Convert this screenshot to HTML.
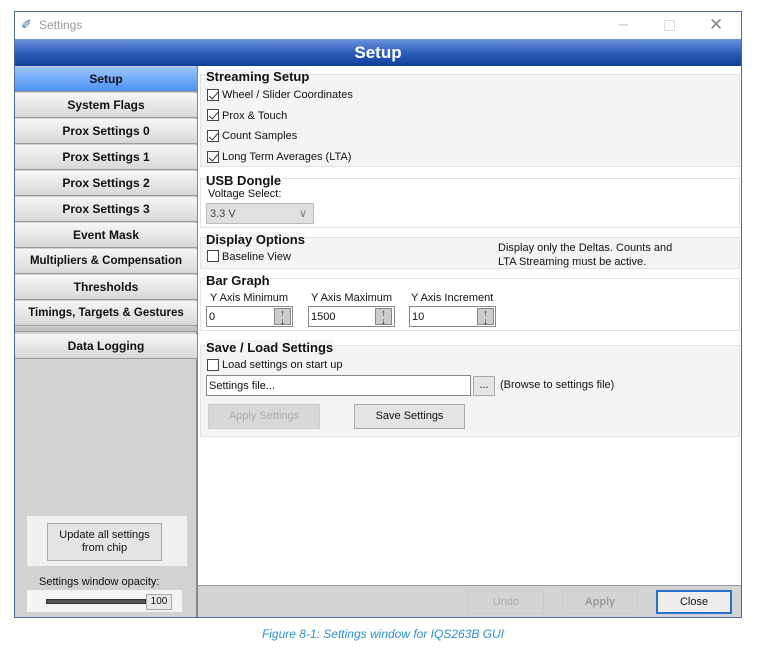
<!DOCTYPE html>
<html><head><meta charset="utf-8"><style>
*{box-sizing:border-box;margin:0;padding:0}
body{width:766px;height:650px;background:#fff;font-family:"Liberation Sans",Tahoma,sans-serif;font-size:11px;color:#111;position:relative;overflow:hidden}
.a{position:absolute}
.win{left:14px;top:11px;width:728px;height:607px;border:1px solid #4a6a9a;background:#fff;overflow:hidden}
.title{left:0;top:0;width:726px;height:27px;background:#fff;color:#999;font-size:12px}
.hdr{left:0;top:27px;width:726px;height:27px;background:linear-gradient(#6a93de,#2a5cb8 55%,#0f3f94);color:#fff;font-weight:bold;font-size:17px;text-align:center;line-height:27px}
.side{left:0;top:54px;width:183px;height:551px;background:#d2d2d2;border-right:2px solid #888}
.nb{position:absolute;left:0;width:182px;height:25px;background:linear-gradient(#f6f6f6,#d8d8d8);border-bottom:1px solid #9a9a9a;font-weight:bold;font-size:12px;text-align:center;line-height:25px}
.sel{background:linear-gradient(#9cc6ff,#4a90f0)}
.grp{position:absolute;left:185px;width:540px;border:1px solid #e2e2e2}
.g{background:#f4f4f4}.w{background:#fff}
.gt{position:absolute;font-weight:bold;font-size:13px;background:inherit}
.cb{position:absolute;width:12px;height:12px;border:1px solid #444;background:#fff}
.cb.c::after{content:"";position:absolute;left:3px;top:0px;width:4px;height:8px;border:solid #333;border-width:0 1.5px 1.5px 0;transform:rotate(40deg)}
.lb{position:absolute;font-size:11px;white-space:nowrap}
.inp{position:absolute;height:21px;border:1px solid #888;background:#fff;font-size:11px;padding:4px 2px}
.sp{position:absolute;width:17px;height:17px;background:#ccc;border:1px solid #888;font-size:9px;line-height:8px;text-align:center;font-weight:bold}
.btn{position:absolute;border:1px solid #aaa;background:#e4e4e4;text-align:center;font-size:11px}
</style></head><body>
<div class="a win">
 <div class="a title"><span class="a" style="left:6px;top:5px;color:#4468a8;font-size:13px">&#x2710;</span><span class="a" style="left:24px;top:6px">Settings</span>
 <span class="a" style="left:604px;top:4px;font-size:16px;color:#bbb">&#x2013;</span><span class="a" style="left:649px;top:8px;width:11px;height:11px;border:1px solid #ddd"></span><span class="a" style="left:694px;top:3px;font-size:17px;color:#888">&#x2715;</span></div>
 <div class="a hdr">Setup</div>
 <div class="a side">
  <div class="nb sel" style="top:1px">Setup</div>
  <div class="nb" style="top:27px">System Flags</div>
  <div class="nb" style="top:53px">Prox Settings 0</div>
  <div class="nb" style="top:79px">Prox Settings 1</div>
  <div class="nb" style="top:105px">Prox Settings 2</div>
  <div class="nb" style="top:131px">Prox Settings 3</div>
  <div class="nb" style="top:157px">Event Mask</div>
  <div class="nb" style="top:183px;font-size:11.5px">Multipliers &amp; Compensation</div>
  <div class="nb" style="top:209px">Thresholds</div>
  <div class="nb" style="top:235px;font-size:11.5px">Timings, Targets &amp; Gestures</div>
  <div class="nb" style="top:268px">Data Logging</div>
  <div class="a" style="left:0;top:261px;width:182px;height:5px;background:#c4c4c4;border-bottom:1px solid #999"></div>
  <div class="a" style="left:12px;top:450px;width:160px;height:50px;background:#f0f0f0"></div>
  <div class="btn" style="left:32px;top:457px;width:115px;height:38px;line-height:13px;padding-top:5px">Update all settings<br>from chip</div>
  <div class="lb" style="left:24px;top:510px">Settings window opacity:</div>
  <div class="a" style="left:12px;top:524px;width:155px;height:22px;background:#f4f4f4"></div>
  <div class="a" style="left:31px;top:533px;width:100px;height:5px;background:#555;border:1px solid #333"></div>
  <div class="btn" style="left:131px;top:528px;width:26px;height:16px;font-size:10px;line-height:14px;background:#e8e8e8">100</div>
 </div>
 <div class="grp g" style="top:62px;height:93px"><div class="gt" style="left:5px;top:-6px">Streaming Setup</div>
  <div class="cb c" style="left:6px;top:14px"></div><div class="lb" style="left:21px;top:14px">Wheel / Slider Coordinates</div>
  <div class="cb c" style="left:6px;top:34px"></div><div class="lb" style="left:21px;top:35px">Prox &amp; Touch</div>
  <div class="cb c" style="left:6px;top:55px"></div><div class="lb" style="left:21px;top:55px">Count Samples</div>
  <div class="cb c" style="left:6px;top:76px"></div><div class="lb" style="left:21px;top:76px">Long Term Averages (LTA)</div></div>
 <div class="grp w" style="top:166px;height:50px"><div class="gt" style="left:5px;top:-6px">USB Dongle</div>
  <div class="lb" style="left:7px;top:9px">Voltage Select:</div>
  <div class="a" style="left:5px;top:24px;width:108px;height:21px;background:#e0e0e0;border:1px solid #bbb;color:#444;padding:4px 3px">3.3 V<span class="a" style="right:6px;top:3px;color:#777">&#x2228;</span></div></div>
 <div class="grp g" style="top:225px;height:32px"><div class="gt" style="left:5px;top:-6px">Display Options</div>
  <div class="cb" style="left:6px;top:12px"></div><div class="lb" style="left:21px;top:13px">Baseline View</div>
  <div class="lb" style="left:297px;top:3px;line-height:14px">Display only the Deltas. Counts and<br>LTA Streaming must be active.</div></div>
 <div class="grp w" style="top:266px;height:53px"><div class="gt" style="left:5px;top:-6px">Bar Graph</div>
  <div class="lb" style="left:9px;top:13px">Y Axis Minimum</div><div class="lb" style="left:110px;top:13px">Y Axis Maximum</div><div class="lb" style="left:210px;top:13px">Y Axis Increment</div>
  <div class="inp" style="left:5px;top:27px;width:87px">0</div><div class="sp" style="left:73px;top:29px">&#x2191;<br>&#x2193;</div>
  <div class="inp" style="left:107px;top:27px;width:87px">1500</div><div class="sp" style="left:174px;top:29px">&#x2191;<br>&#x2193;</div>
  <div class="inp" style="left:208px;top:27px;width:87px">10</div><div class="sp" style="left:276px;top:29px">&#x2191;<br>&#x2193;</div></div>
 <div class="grp g" style="top:333px;height:92px"><div class="gt" style="left:5px;top:-6px">Save / Load Settings</div>
  <div class="cb" style="left:6px;top:13px"></div><div class="lb" style="left:21px;top:13px">Load settings on start up</div>
  <div class="inp" style="left:5px;top:29px;width:265px">Settings file...</div>
  <div class="btn" style="left:272px;top:30px;width:22px;height:20px;line-height:17px">...</div>
  <div class="lb" style="left:299px;top:33px">(Browse to settings file)</div>
  <div class="btn" style="left:7px;top:58px;width:112px;height:25px;line-height:23px;color:#aaa;background:#d8d8d8;border-color:#ccc">Apply Settings</div>
  <div class="btn" style="left:153px;top:58px;width:111px;height:25px;line-height:23px">Save Settings</div></div>
 <div class="a" style="left:183px;top:573px;width:543px;height:32px;background:#d4d4d4;border-top:1px solid #999">
  <div class="btn" style="left:270px;top:4px;width:76px;height:24px;line-height:22px;color:#aaa;background:#d4d4d4;border-color:#ccc">Undo</div>
  <div class="btn" style="left:364px;top:4px;width:76px;height:24px;line-height:22px;color:#999;font-weight:bold;background:#d4d4d4;border-color:#ccc">Apply</div>
  <div class="btn" style="left:458px;top:4px;width:76px;height:24px;line-height:20px;border:2px solid #2a70c8;background:#eee">Close</div></div>
</div>
<div class="a" style="left:0;top:627px;width:766px;text-align:center;font-style:italic;color:#2f8fcf;font-size:12px">Figure 8-1: Settings window for IQS263B GUI</div>
</body></html>
